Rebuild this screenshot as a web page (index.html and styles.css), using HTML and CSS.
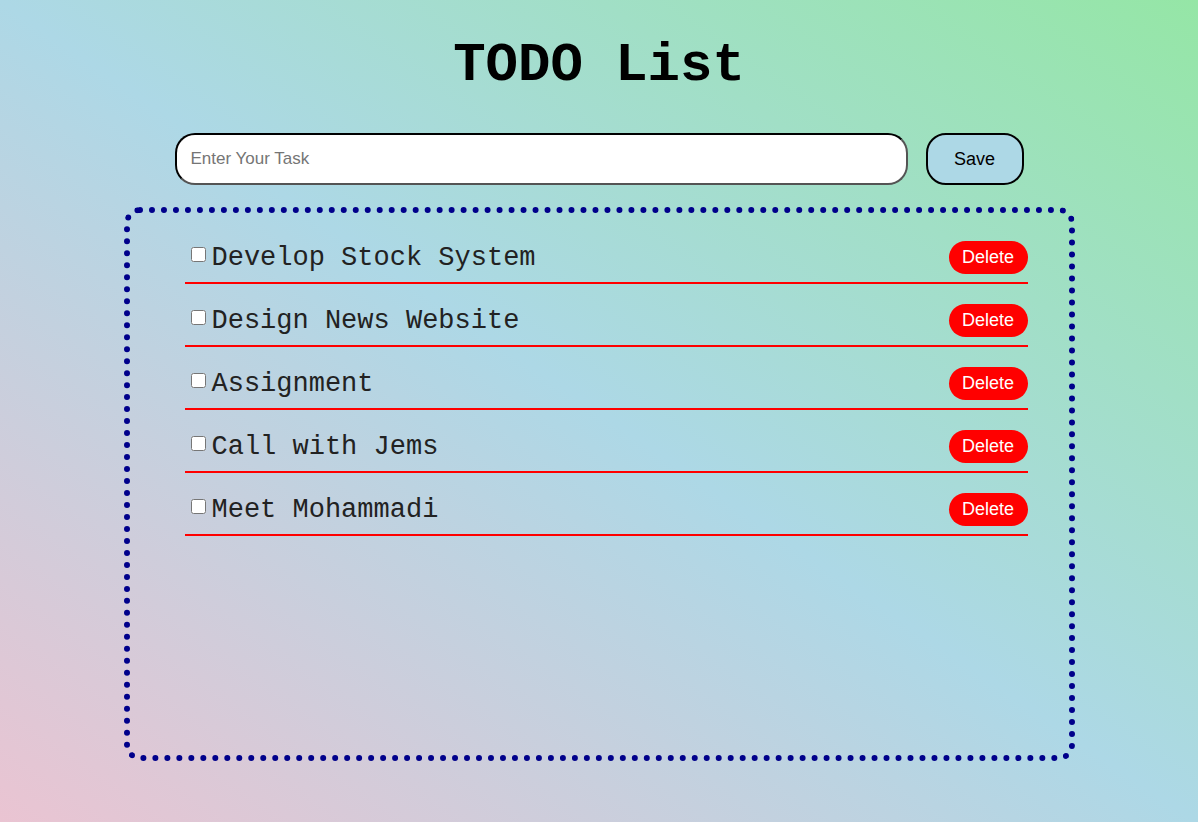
FILE: index.html
```html
<!DOCTYPE html>
<html lang="en">
<head>
<meta charset="utf-8">
<title>TODO List</title>
<link rel="stylesheet" href="styles.css">
</head>
<body>
<main class="app">
  <h1 class="title">TODO List</h1>
  <div class="entry">
    <input class="task-input" type="text" placeholder="Enter Your Task">
    <button class="save-btn">Save</button>
  </div>
  <section class="board">
    <ul class="tasks">
      <li class="task"><input type="checkbox" class="check"><span class="task-text">Develop Stock System</span><button class="del-btn">Delete</button></li>
      <li class="task"><input type="checkbox" class="check"><span class="task-text">Design News Website</span><button class="del-btn">Delete</button></li>
      <li class="task"><input type="checkbox" class="check"><span class="task-text">Assignment</span><button class="del-btn">Delete</button></li>
      <li class="task"><input type="checkbox" class="check"><span class="task-text">Call with Jems</span><button class="del-btn">Delete</button></li>
      <li class="task"><input type="checkbox" class="check"><span class="task-text">Meet Mohammadi</span><button class="del-btn">Delete</button></li>
    </ul>
  </section>
</main>
</body>
</html>
```
FILE: styles.css
```css
html, body {
  margin: 0;
  padding: 0;
  height: 100%;
}
body {
  min-height: 100vh;
  background: linear-gradient(to top right, #eac4d2, #add8e6, #95e6a6);
  font-family: "Liberation Sans", Arial, sans-serif;
}
.app {
  display: flex;
  flex-direction: column;
  align-items: center;
  padding-top: 35px;
}
.title {
  margin: 0;
  font-family: "Liberation Mono", "Courier New", monospace;
  font-weight: bold;
  font-size: 54px;
  line-height: 61px;
  color: #000;
}
.entry {
  display: flex;
  gap: 18px;
  margin-top: 37px;
}
.task-input {
  box-sizing: border-box;
  width: 733px;
  height: 52px;
  padding: 0 14px;
  border: 2px inset #000;
  border-radius: 20px;
  background: #fff;
  font-family: "Liberation Sans", Arial, sans-serif;
  font-size: 17px;
  outline: none;
}
.task-input::placeholder {
  color: #757575;
}
.save-btn {
  box-sizing: border-box;
  width: 98px;
  height: 52px;
  border: 2px solid #000;
  border-radius: 20px;
  background: lightblue;
  font-family: "Liberation Sans", Arial, sans-serif;
  font-size: 18px;
  color: #000;
}
.board {
  box-sizing: border-box;
  width: 951px;
  height: 554px;
  margin-top: 22px;
  border: 6px dotted darkblue;
  border-radius: 16px;
  padding: 8px 41px 0 55px;
}
.tasks {
  list-style: none;
  margin: 0;
  padding: 0;
}
.task {
  display: flex;
  align-items: center;
  padding: 20px 0 8px 6px;
  border-bottom: 2px solid red;
}
.check {
  margin: 0 6px 6px 0;
  width: 15px;
  height: 15px;
}
.task-text {
  flex: 1;
  font-family: "Liberation Mono", "Courier New", monospace;
  font-size: 27px;
  color: #222;
}
.del-btn {
  box-sizing: border-box;
  width: 79px;
  height: 33px;
  border: none;
  border-radius: 17px;
  background: red;
  color: #fff;
  font-family: "Liberation Sans", Arial, sans-serif;
  font-size: 18px;
}
```
